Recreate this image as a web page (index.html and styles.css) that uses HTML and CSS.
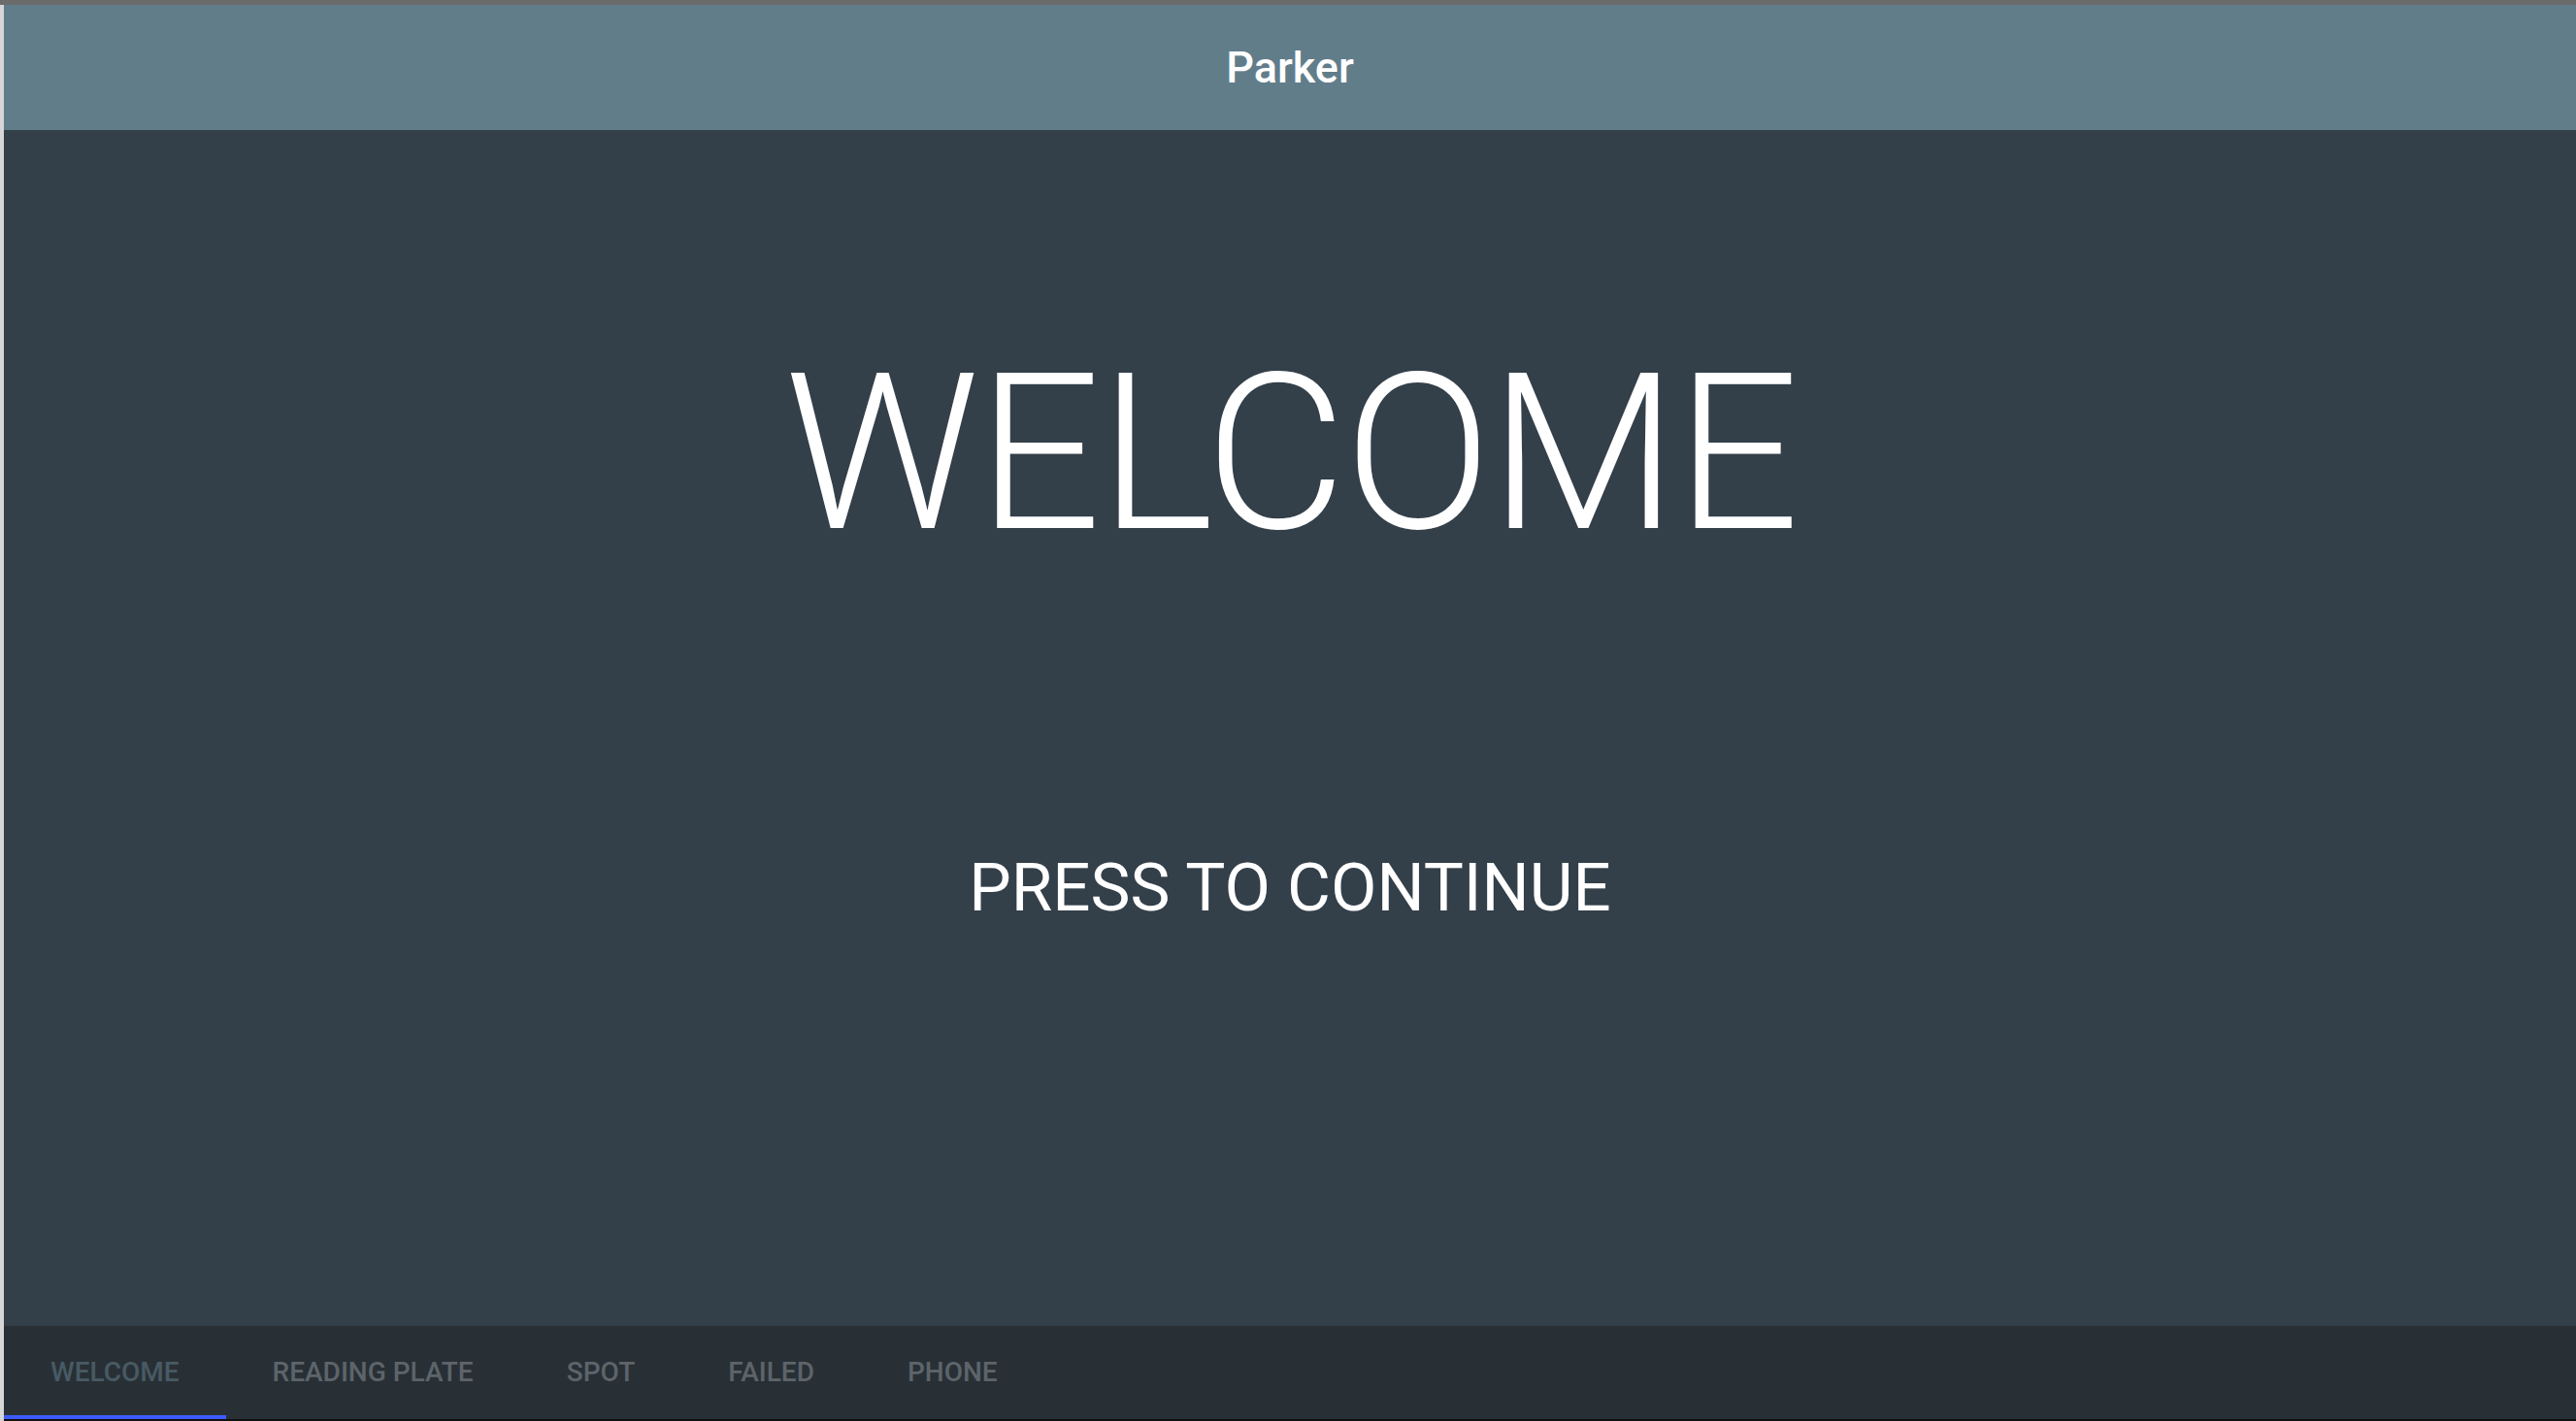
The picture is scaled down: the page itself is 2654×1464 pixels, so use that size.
FILE: index.html
```html
<!DOCTYPE html>
<html>
<head>
<meta charset="utf-8">
<link rel="stylesheet" href="styles.css">
</head>
<body>
<div class="window">
  <div class="topstrip"></div>
  <div class="row">
    <div class="leftstrip"></div>
    <div class="app">
      <header class="toolbar"><span class="title">Parker</span></header>
      <main class="content">
        <h1 class="welcome">WELCOME</h1>
        <p class="press">PRESS TO CONTINUE</p>
      </main>
      <nav class="tabs">
        <div class="tab active">WELCOME</div>
        <div class="tab">READING PLATE</div>
        <div class="tab">SPOT</div>
        <div class="tab">FAILED</div>
        <div class="tab">PHONE</div>
      </nav>
      <div class="bottomstrip"></div>
    </div>
  </div>
</div>
</body>
</html>
```
FILE: styles.css
```css
html, body {
  margin: 0;
  padding: 0;
  background: #111;
}
.window {
  width: 2654px;
  height: 1464px;
  display: flex;
  flex-direction: column;
  font-family: Roboto, "Liberation Sans", sans-serif;
  overflow: hidden;
}
.topstrip {
  height: 5px;
  background: #6b6b6b;
  flex: none;
}
.row {
  flex: 1;
  display: flex;
  min-height: 0;
}
.leftstrip {
  width: 4px;
  background: #d6d6d6;
  flex: none;
}
.app {
  flex: 1;
  display: flex;
  flex-direction: column;
  min-width: 0;
}
.toolbar {
  height: 129px;
  flex: none;
  background: #617d8a;
  display: flex;
  align-items: center;
  justify-content: center;
}
.title {
  color: #ffffff;
  font-size: 45px;
  font-weight: 500;
  line-height: 1;
}
.content {
  flex: 1;
  background: #333f49;
  display: flex;
  flex-direction: column;
  align-items: center;
  padding-top: 222px;
  box-sizing: border-box;
  min-height: 0;
}
.welcome {
  margin: 0;
  color: #ffffff;
  font-size: 224px;
  font-weight: 300;
  line-height: 1;
  letter-spacing: -2px;
  padding-left: 2px;
}
.press {
  margin: 300px 0 0 0;
  color: #ffffff;
  font-size: 69px;
  font-weight: 400;
  line-height: 1;
}
.tabs {
  height: 96px;
  flex: none;
  background: #283036;
  display: flex;
  align-items: stretch;
}
.tab {
  position: relative;
  display: flex;
  align-items: center;
  padding: 0 48px;
  font-size: 28px;
  font-weight: 500;
  line-height: 1;
  color: #5d646a;
}
.tab.active {
  color: #485a64;
}
.tab.active::after {
  content: "";
  position: absolute;
  left: 0;
  right: 0;
  bottom: 0;
  height: 4px;
  background: #3d5afe;
}
.bottomstrip {
  height: 2px;
  flex: none;
  background: #111;
}
```
